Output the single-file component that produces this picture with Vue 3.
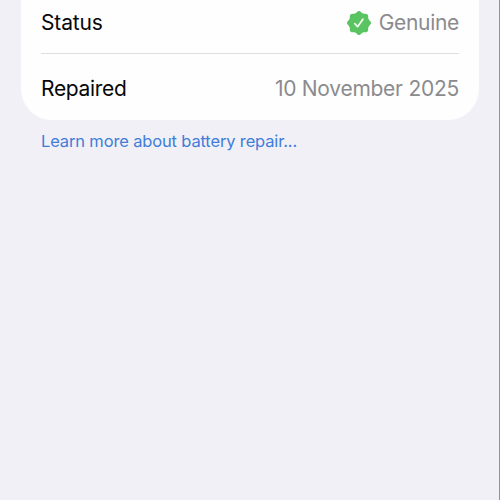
<script setup>
const sealAngles = [0, 45]
</script>

<template>
  <main class="screen">
    <section class="card">
      <div class="row status">
        <span class="label status-label">Status</span>
        <span class="value">
          <svg class="seal" viewBox="0 0 24 24" aria-hidden="true">
            <g fill="#5ac463">
              <circle cx="12" cy="12" r="10.2" />
              <rect
                v-for="angle in sealAngles"
                :key="angle"
                x="2.8"
                y="2.8"
                width="18.4"
                height="18.4"
                rx="2.8"
                :transform="`rotate(${angle} 12 12)`"
              />
            </g>
            <path d="M7.9 12.7 10.6 15.7 15.9 8.2" fill="none" stroke="#f4fff4" stroke-width="1.7" stroke-linecap="round" stroke-linejoin="round" />
          </svg>
          <span class="genuine">Genuine</span>
        </span>
      </div>
      <div class="row repaired">
        <span class="label repaired-label">Repaired</span>
        <span class="value date">10 November 2025</span>
      </div>
    </section>
    <a class="link">Learn more about battery repair...</a>
  </main>
</template>

<style>
body {
  margin: 0;
  background: #f1f0f6;
}
</style>

<style scoped>
.screen {
  box-sizing: border-box;
  width: 500px;
  height: 500px;
  padding: 0 20px 0 21px;
  overflow: hidden;
  background: #f1f0f6;
  border-right: 1px solid #929196;
  font-family: Inter, "Liberation Sans", sans-serif;
}
.card {
  box-sizing: border-box;
  width: 458px;
  height: 120px;
  padding: 0 20px;
  background: #fefefe;
  border-radius: 0 0 31px 31px;
}
.row {
  display: flex;
  align-items: center;
  justify-content: space-between;
  box-sizing: border-box;
  font-size: 21px;
  line-height: 26px;
  letter-spacing: -0.31px;
  white-space: nowrap;
}
.status {
  height: 54px;
  padding-bottom: 8px;
  border-bottom: 1px solid #dfdfe1;
}
.repaired {
  height: 66px;
  padding-top: 4px;
}
.label {
  color: #080808;
}
.status-label {
  letter-spacing: -0.15px;
}
.value {
  display: flex;
  align-items: center;
  color: #8b8b8e;
}
.date {
  letter-spacing: -0.26px;
}
.seal {
  width: 24px;
  height: 24px;
  margin-right: 8px;
}
.link {
  display: block;
  padding: 11px 0 0 20px;
  color: #417dd9;
  font-size: 16.5px;
  line-height: 20px;
  letter-spacing: -0.15px;
  white-space: nowrap;
}
</style>
